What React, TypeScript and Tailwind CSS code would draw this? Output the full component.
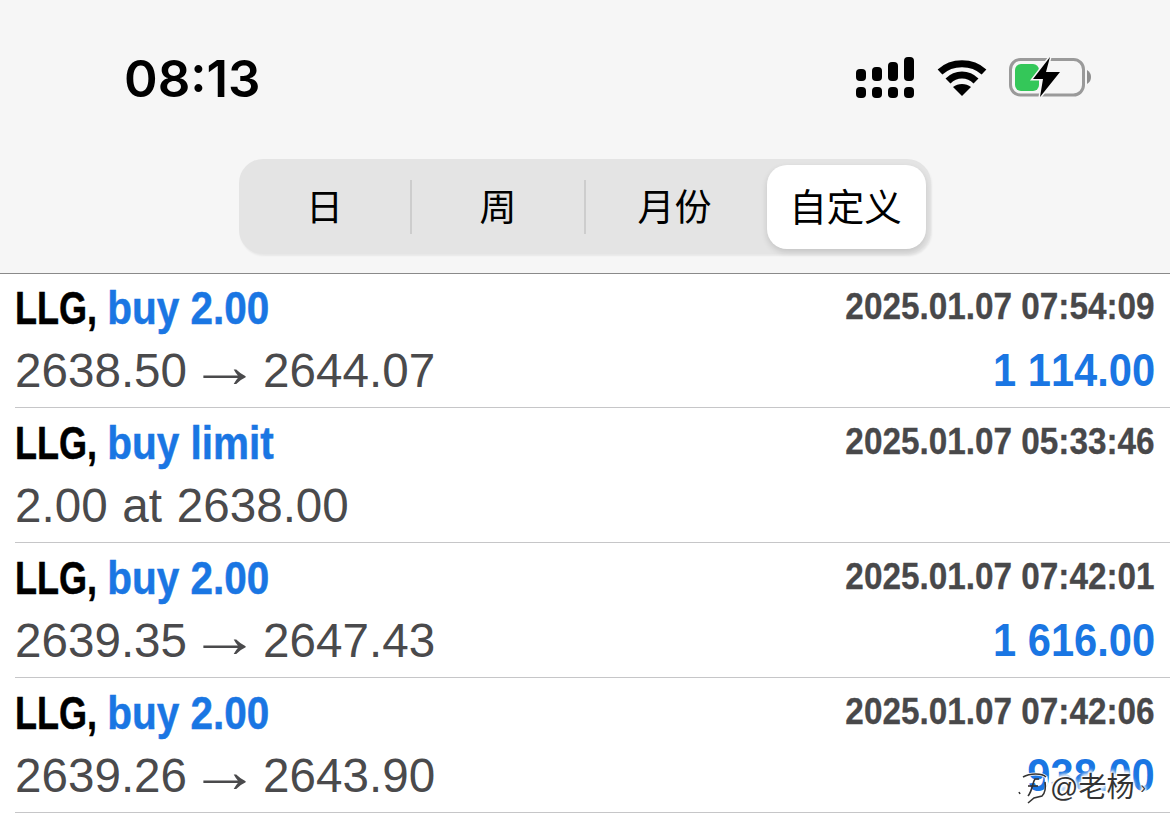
import React from 'react';

const trades = [
  { action: 'buy 2.00', time: '2025.01.07 07:54:09', from: '2638.50', to: '2644.07', amount: '1 114.00' },
  { action: 'buy limit', time: '2025.01.07 05:33:46', from: '2.00 at 2638.00', to: '', amount: '' },
  { action: 'buy 2.00', time: '2025.01.07 07:42:01', from: '2639.35', to: '2647.43', amount: '1 616.00' },
  { action: 'buy 2.00', time: '2025.01.07 07:42:06', from: '2639.26', to: '2643.90', amount: '938.00' },
];

function StatusIcons() {
  return (
    <div className="flex items-center">
      {/* signal */}
      <svg width="58" height="41" viewBox="0 0 58 41" fill="#000">
        <rect x="0" y="30" width="10" height="11" rx="4" />
        <rect x="16" y="30" width="10" height="11" rx="4" />
        <rect x="32" y="30" width="10" height="11" rx="4" />
        <rect x="48" y="30" width="10" height="11" rx="4" />
        <rect x="0" y="12" width="10" height="12" rx="4" />
        <rect x="16" y="10" width="10" height="14" rx="4" />
        <rect x="32" y="5" width="10" height="19" rx="4" />
        <rect x="48" y="0" width="10" height="24" rx="4" />
      </svg>
      {/* wifi */}
      <svg className="ml-[23px]" width="50" height="38" viewBox="0 0 50 38" fill="none" stroke="#000" strokeWidth="7">
        <path d="M3 14 C15 3 35 3 47 14" />
        <path d="M11 23 C19 15 31 15 39 23" />
        <path d="M25 38 L16 29 C21 25 29 25 34 29 Z" fill="#000" stroke="none" />
      </svg>
      {/* battery */}
      <svg className="ml-[22px] overflow-visible" width="82" height="40" viewBox="0 0 82 40">
        <rect x="1.5" y="2.5" width="73" height="35.5" rx="10" fill="none" stroke="#9a9a9a" strokeWidth="3" />
        <rect x="6" y="7" width="24" height="27" rx="6" fill="#34c759" />
        <path d="M78 13 C81 15 82 17 82 20 C82 23 81 25 78 27 Z" fill="#8e8e8e" />
        <path d="M41 0 L24 22 L34 22 L31 40 L51 15 L37 15 Z" fill="#000" stroke="#f6f6f6" strokeWidth="3" paintOrder="stroke" />
      </svg>
    </div>
  );
}

function SegmentedControl() {
  return (
    <div className="ml-[239px] mt-[5px] flex h-[95px] w-[692px] items-center rounded-[24px] bg-[#e4e4e4] text-[37px] text-black shadow-[1px_2px_2px_rgba(0,0,0,0.06)]">
      <div className="flex h-[54px] w-[173px] items-center justify-center border-r-2 border-[#cdcdcd] pt-[4px]">日</div>
      <div className="flex h-[54px] w-[174px] items-center justify-center border-r-2 border-[#cdcdcd] pt-[4px]">周</div>
      <div className="flex h-[54px] w-[177px] items-center justify-center pt-[4px]">月份</div>
      <div className="ml-[4px] flex h-[84px] w-[159px] items-center justify-center rounded-[20px] bg-white pr-[2px] pt-[4px] text-[37.5px] shadow-[0_3px_6px_rgba(0,0,0,0.14)]">自定义</div>
    </div>
  );
}

function TradeRow({ action, time, from, to, amount }: { action: string; time: string; from: string; to: string; amount: string }) {
  return (
    <div className="ml-[15px] h-[135px] border-b border-[#c6c6c8] pr-[15px] pt-[4px]">
      <div className="flex h-[63px] items-center justify-between">
        <div className="origin-left scale-x-[0.88] whitespace-nowrap text-[46px] font-bold text-black [-webkit-text-stroke:0.5px]">
          <span className="mr-[-12.7px] inline-block origin-left scale-x-[0.89]">LLG,</span> <span className="text-[#1a76e3]">{action}</span>
        </div>
        <div className="mb-[4px] origin-right scale-x-[0.9] whitespace-nowrap text-[37px] font-bold text-[#48484a] [-webkit-text-stroke:0.3px]">{time}</div>
      </div>
      <div className="-mt-px flex h-[63px] items-center justify-between">
        {to ? (
          <div className="whitespace-nowrap text-[47.6px] text-[#4a4a4c]">
            {from} <span className="inline-block -translate-y-[5px] scale-x-[1.5] scale-y-[1.3] px-[1px]">→</span> {to}
          </div>
        ) : (
          <div className="whitespace-nowrap text-[47.6px] text-[#4a4a4c] [word-spacing:1.5px]">{from}</div>
        )}
        {amount && (
          <div className="origin-right scale-x-[0.905] whitespace-nowrap text-[46px] font-bold text-[#1a76e3] [font-kerning:none]">{amount}</div>
        )}
      </div>
    </div>
  );
}

export default function App() {
  return (
    <div className="relative h-[836px] w-[1170px] overflow-hidden bg-white font-['Liberation_Sans','Noto_Sans_CJK_SC',sans-serif]">
      <div className="h-[274px] border-b border-[#8a8a8a] bg-[#f6f6f6]">
        <div className="flex h-[154px] items-center justify-between pl-[124px] pr-[79px]">
          <div className="mt-[2px] font-['Inter'] text-[51px] font-semibold leading-none text-black">08:13</div>
          <StatusIcons />
        </div>
        <SegmentedControl />
      </div>
      <div className="-mt-px">
        {trades.map((t, i) => (
          <TradeRow key={i} {...t} />
        ))}
      </div>
      {/* watermark */}
      <div className="absolute left-[1018px] top-[768px] flex items-center text-[28px] leading-[40px] text-[#333] [text-shadow:0_0_3px_#fff,0_0_3px_#fff,0_0_4px_#fff,0_0_6px_#fff,1px_1px_1px_#fff,-1px_-1px_1px_#fff,0_3px_2px_#fff,0_-3px_3px_#fff,0_5px_4px_#fff]">
        <svg width="30" height="36" viewBox="0 0 30 36" fill="none" stroke="#333" strokeWidth="1.6">
          <path d="M5 7 C12 3 24 3 28 7 C29 14 28 22 24 26 L16 28 L10 33" stroke="#fff" strokeWidth="3" />
          <path d="M5 7 C12 3 24 3 28 7 M27 12 C28 18 27 23 24 26 L16 28 L10 33" />
          <path d="M2 24 L1 22" />
          <path d="M10 26 C15 20 14 13 17 9 L21 9" />
          <path d="M10 16 L20 16" />
        </svg>
        <span className="ml-[2px]">@老杨</span>
        <span className="ml-[6px] text-[16px]">›</span>
      </div>
    </div>
  );
}
